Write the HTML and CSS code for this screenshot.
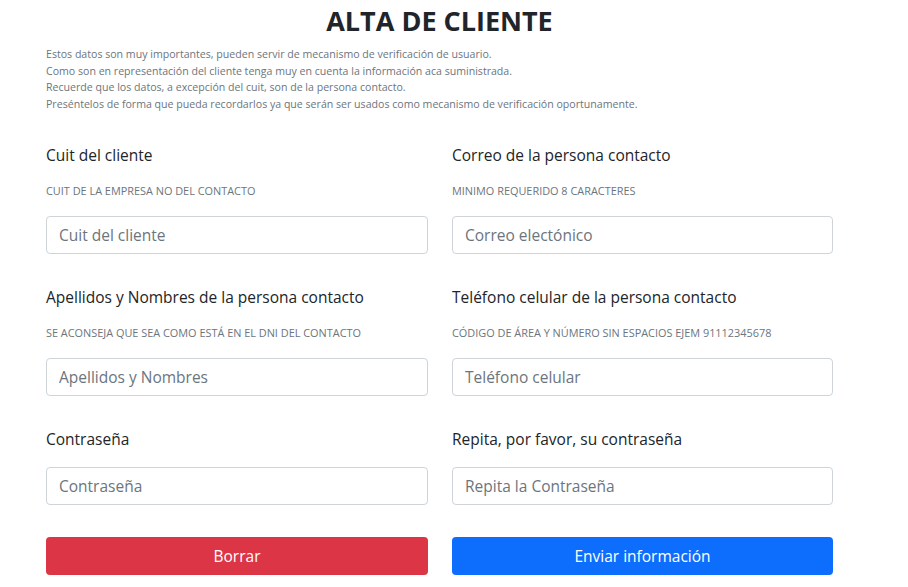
FILE: index.html
```html
<!DOCTYPE html>
<html lang="es">
<head>
<meta charset="utf-8">
<title>Alta de cliente</title>
<link rel="stylesheet" href="styles.css">
</head>
<body>
<main class="page">
  <h1 class="title">ALTA DE CLIENTE</h1>
  <div class="intro">
    <p>Estos datos son muy importantes, pueden servir de mecanismo de verificación de usuario.</p>
    <p>Como son en representación del cliente tenga muy en cuenta la información aca suministrada.</p>
    <p>Recuerde que los datos, a excepción del cuit, son de la persona contacto.</p>
    <p>Preséntelos de forma que pueda recordarlos ya que serán ser usados como mecanismo de verificación oportunamente.</p>
  </div>
  <form class="form">
    <div class="field">
      <label class="label">Cuit del cliente</label>
      <div class="help">CUIT DE LA EMPRESA NO DEL CONTACTO</div>
      <input class="input" type="text" placeholder="Cuit del cliente">
    </div>
    <div class="field">
      <label class="label">Correo de la persona contacto</label>
      <div class="help">MINIMO REQUERIDO 8 CARACTERES</div>
      <input class="input" type="text" placeholder="Correo electónico">
    </div>
    <div class="field">
      <label class="label">Apellidos y Nombres de la persona contacto</label>
      <div class="help">SE ACONSEJA QUE SEA COMO ESTÁ EN EL DNI DEL CONTACTO</div>
      <input class="input" type="text" placeholder="Apellidos y Nombres">
    </div>
    <div class="field">
      <label class="label">Teléfono celular de la persona contacto</label>
      <div class="help">CÓDIGO DE ÁREA Y NÚMERO SIN ESPACIOS EJEM 91112345678</div>
      <input class="input" type="text" placeholder="Teléfono celular">
    </div>
    <div class="field">
      <label class="label">Contraseña</label>
      <input class="input" type="password" placeholder="Contraseña">
    </div>
    <div class="field">
      <label class="label">Repita, por favor, su contraseña</label>
      <input class="input" type="password" placeholder="Repita la Contraseña">
    </div>
    <div class="actions">
      <button type="reset" class="btn btn-danger">Borrar</button>
      <button type="button" class="btn btn-primary">Enviar información</button>
    </div>
  </form>
</main>
</body>
</html>
```
FILE: styles.css
```css
* { box-sizing: border-box; }
html, body { margin: 0; padding: 0; background: #fff; }
body {
  font-family: "Open Sans", "Noto Sans", sans-serif;
  color: #212529;
}
.page {
  width: 787px;
  margin-left: 46px;
  padding-top: 4px;
}
.title {
  margin: 0;
  text-align: center;
  font-size: 27px;
  line-height: 34px;
  font-weight: 700;
  color: #212529;
}
.intro {
  margin-top: 8px;
  font-size: 10.6px;
  line-height: 16.5px;
  color: #6c757d;
}
.intro p { margin: 0; }
.form {
  margin-top: 31px;
  display: grid;
  grid-template-columns: 382px 381px;
  column-gap: 24px;
  row-gap: 31px;
}
.field { display: flex; flex-direction: column; }
.label {
  font-size: 15.5px;
  line-height: 24px;
  margin-bottom: 16px;
}
.help {
  font-size: 10.9px;
  line-height: 14px;
  color: #6c757d;
  text-transform: uppercase;
  margin-top: 1px;
  margin-bottom: 18px;
}
.input {
  height: 38px;
  width: 100%;
  border: 1px solid #ced4da;
  border-radius: 4px;
  padding: 0 12px;
  font-family: inherit;
  font-size: 15.5px;
  color: #212529;
  background: #fff;
}
.input::placeholder { color: #6c757d; }
.actions {
  grid-column: 1 / 3;
  display: grid;
  grid-template-columns: 382px 381px;
  column-gap: 24px;
  margin-top: 1px;
}
.btn {
  height: 38px;
  border: none;
  border-radius: 4px;
  font-family: inherit;
  font-size: 15.5px;
  color: #fff;
}
.btn-danger { background: #dc3545; }
.btn-primary { background: #0d6efd; }
```
